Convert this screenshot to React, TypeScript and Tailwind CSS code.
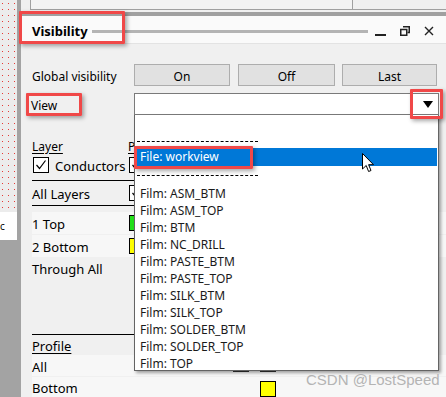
function Check() {
  return (
    <span className="w-4 h-4 bg-white border border-black flex items-center justify-center shrink-0">
      <svg width="12" height="12" viewBox="0 0 12 12">
        <path d="M1.5 6 L4.5 9.5 L10.5 1.5" fill="none" stroke="black" strokeWidth="1.2" />
      </svg>
    </span>
  );
}

function Dots() {
  return (
    <svg width="17" height="212" className="block">
      <defs>
        <pattern id="dots" width="6" height="6" patternUnits="userSpaceOnUse">
          <rect x="2" y="3" width="1" height="1" fill="#e53935" />
        </pattern>
      </defs>
      <rect width="17" height="212" fill="#ececec" />
      <rect width="17" height="212" fill="url(#dots)" />
    </svg>
  );
}

const films = [
  "Film: ASM_BTM",
  "Film: ASM_TOP",
  "Film: BTM",
  "Film: NC_DRILL",
  "Film: PASTE_BTM",
  "Film: PASTE_TOP",
  "Film: SILK_BTM",
  "Film: SILK_TOP",
  "Film: SOLDER_BTM",
  "Film: SOLDER_TOP",
  "Film: TOP",
];

const redBox =
  "absolute border-[3px] border-[#f04848] rounded-[1px] shadow-[2px_2px_4px_rgba(0,0,0,0.35)] pointer-events-none";

const btn = "h-[22px] pt-[3px] bg-[#e1e1e1] border border-[#adadad]";

export default function App() {
  return (
    <div className="relative w-[446px] h-[397px] overflow-hidden flex bg-[#f0f0f0] font-['Noto_Sans',sans-serif] text-[12px] text-black">
      {/* left edge of the canvas */}
      <div className="w-[17px] flex flex-col shrink-0">
        <Dots />
        <div className="h-[28px] shrink-0 bg-white flex items-center overflow-hidden">
          <span className="text-[10px] leading-none">c</span>
        </div>
        <div className="flex-1 bg-[#a3a3a3]" />
      </div>
      <div className="w-[4px] bg-[#a3a3a3] shrink-0" />

      {/* docked panel */}
      <div className="flex-1 flex flex-col min-h-0">
        <div className="h-[10px] shrink-0 flex">
          <div className="w-[9px]" />
          <div className="w-[323px] border-l border-b border-r border-[#a0a0a0] bg-[#f3f3f3]" />
          <div className="flex-1 border-b border-[#a0a0a0]" />
        </div>
        <div className="h-[2px] shrink-0" />
        <div className="h-[4px] shrink-0 bg-[#a0a0a0]" />
        <div className="h-[28px] shrink-0 bg-[#fafafa] border-b border-[#e3e3e3] flex items-center pt-[3px] pl-[11px] pr-[12px]">
          <span className="font-bold text-[13px] leading-none">Visibility</span>
          <div className="ml-[4px] w-[276px] h-[3px] bg-[#b4b4b4]" />
          <div className="flex-1 flex items-center justify-between pl-[7px]">
            <svg width="11" height="12" viewBox="0 0 11 12">
              <rect x="0" y="9" width="11" height="2" fill="#222" />
            </svg>
            <svg width="10" height="10" viewBox="0 0 10 10">
              <path d="M3 0.75 H9.25 V6.5 H7.5" fill="none" stroke="#222" strokeWidth="1.5" />
              <rect x="0.75" y="3.5" width="6" height="5.75" fill="none" stroke="#222" strokeWidth="1.5" />
            </svg>
            <svg width="10" height="10" viewBox="0 0 10 10">
              <path d="M1 1 L9 9 M9 1 L1 9" stroke="#222" strokeWidth="1.4" />
            </svg>
          </div>
        </div>

        <div className="flex flex-col shrink-0 pl-[11px]">
          <div className="mt-[20px] flex h-[22px] items-center">
            <div className="w-[102px] pt-[4px]">Global visibility</div>
            <button className={`w-[96px] ${btn}`}>On</button>
            <button className={`ml-[8px] w-[97px] ${btn}`}>Off</button>
            <button className={`ml-[7px] w-[95px] ${btn}`}>Last</button>
          </div>
          <div className="mt-[7px] flex h-[22px] items-center">
            <div className="w-[102px] -ml-[1px] pt-[3px]">View</div>
            <div className="ml-[1px] w-[305px] h-[22px] bg-white border border-[#7a7a7a] flex items-center justify-end pr-[5px]">
              <svg width="10" height="7" viewBox="0 0 10 7">
                <path d="M0 0 H10 L5 7 Z" fill="black" />
              </svg>
            </div>
          </div>

          <div className="mt-[22px] flex h-[16px] items-center pt-[3px]">
            <div className="w-[96px] underline underline-offset-2">Layer</div>
            <div className="underline underline-offset-2">P</div>
          </div>
          <div className="mt-[2px] flex h-[20px] items-center">
            <div className="w-[96px] flex items-center pl-[1px]">
              <Check />
              <span className="ml-[6px] pt-[3px] text-[13px]">Conductors</span>
            </div>
            <div className="pl-[1px]">
              <Check />
            </div>
          </div>
          <div className="mt-[5px] h-px w-[102px] bg-black" />
          <div className="flex h-[24px] items-center">
            <div className="w-[96px] pt-[4px] text-[13px]">All Layers</div>
            <div className="pl-[1px]">
              <Check />
            </div>
          </div>
          <div className="h-px w-[102px] bg-black" />
          <div className="mt-[6px] flex h-[22px] items-center bg-[#f7f7f7] text-[13px]">
            <div className="w-[96px] pt-[4px]">1 Top</div>
            <div className="ml-[1px] w-[16px] h-[16px] bg-[#22e01a] border border-black" />
          </div>
          <div className="mt-[1px] flex h-[22px] items-center bg-[#f7f7f7] text-[13px]">
            <div className="w-[96px] pt-[4px]">2 Bottom</div>
            <div className="ml-[1px] w-[16px] h-[16px] bg-[#ffff00] border border-black" />
          </div>
          <div className="flex h-[22px] items-center text-[13px]">
            <div className="w-[96px] pt-[4px]">Through All</div>
          </div>

          <div className="mt-[55px] h-px w-[102px] bg-black" />
          <div className="flex h-[18px] items-center text-[13px]">
            <div className="underline underline-offset-2 pt-[5px]">Profile</div>
          </div>
          <div className="mt-[2px] flex h-[21px] items-center bg-[#f7f7f7] text-[13px]">
            <div className="w-[96px] pt-[5px]">All</div>
            <div className="ml-[105px] w-[16px] h-[12px] bg-[#c80000] border border-[#333]" />
            <div className="ml-[11px] w-[16px] h-[12px] bg-white border border-[#333] flex items-end justify-center">
              <span className="w-[2px] h-[2px] bg-[#333] mb-[1px]" />
            </div>
          </div>
          <div className="mt-[1px] flex h-[21px] items-center bg-[#f7f7f7] text-[13px]">
            <div className="w-[96px] pt-[2px]">Bottom</div>
            <div className="ml-[132px] mt-[3px] w-[16px] h-[16px] bg-[#ffff00] border border-black" />
          </div>
        </div>
      </div>

      {/* open dropdown list */}
      <div className="absolute left-[134px] top-[115px] w-[305px] h-[256px] bg-white border border-t-0 border-[#646464] shadow-[2px_2px_3px_rgba(0,0,0,0.35)] overflow-hidden text-[12px]">
        <div className="mt-[26px] ml-[2px] w-[121px] border-t border-dashed border-black" />
        <div className="mt-[6px] mx-[1px] h-[18px] bg-[#0078d7] text-white flex items-center pl-[4px]">
          File: workview
        </div>
        <div className="mt-[9px] ml-[2px] w-[121px] border-t border-dashed border-black" />
        <div className="mt-[8px] flex flex-col">
          {films.map((f) => (
            <div key={f} className="h-[17px] flex items-center pt-[2px] pl-[5px] text-[#1a1a1a]">
              {f}
            </div>
          ))}
        </div>
      </div>

      {/* mouse pointer */}
      <svg className="absolute left-[362px] top-[153px]" width="13" height="20" viewBox="0 0 13 20">
        <path d="M0.5 0.5 V16 L4.2 12.5 L6.6 18.5 L9 17.5 L6.6 11.7 H11.5 Z" fill="white" stroke="black" strokeWidth="1" />
      </svg>

      {/* annotation boxes */}
      <div className={`${redBox} left-[19px] top-[11px] w-[106px] h-[33px]`} />
      <div className={`${redBox} left-[26px] top-[93px] w-[56px] h-[23px]`} />
      <div className={`${redBox} left-[410px] top-[89px] w-[33px] h-[30px]`} />
      <div className={`${redBox} left-[134px] top-[146px] w-[119px] h-[23px]`} />

      {/* watermark */}
      <div className="absolute left-[306px] top-[370px] text-[15px] leading-[20px] text-[#b4b4b4] font-['Liberation_Sans',sans-serif]">
        CSDN @LostSpeed
      </div>
    </div>
  );
}
